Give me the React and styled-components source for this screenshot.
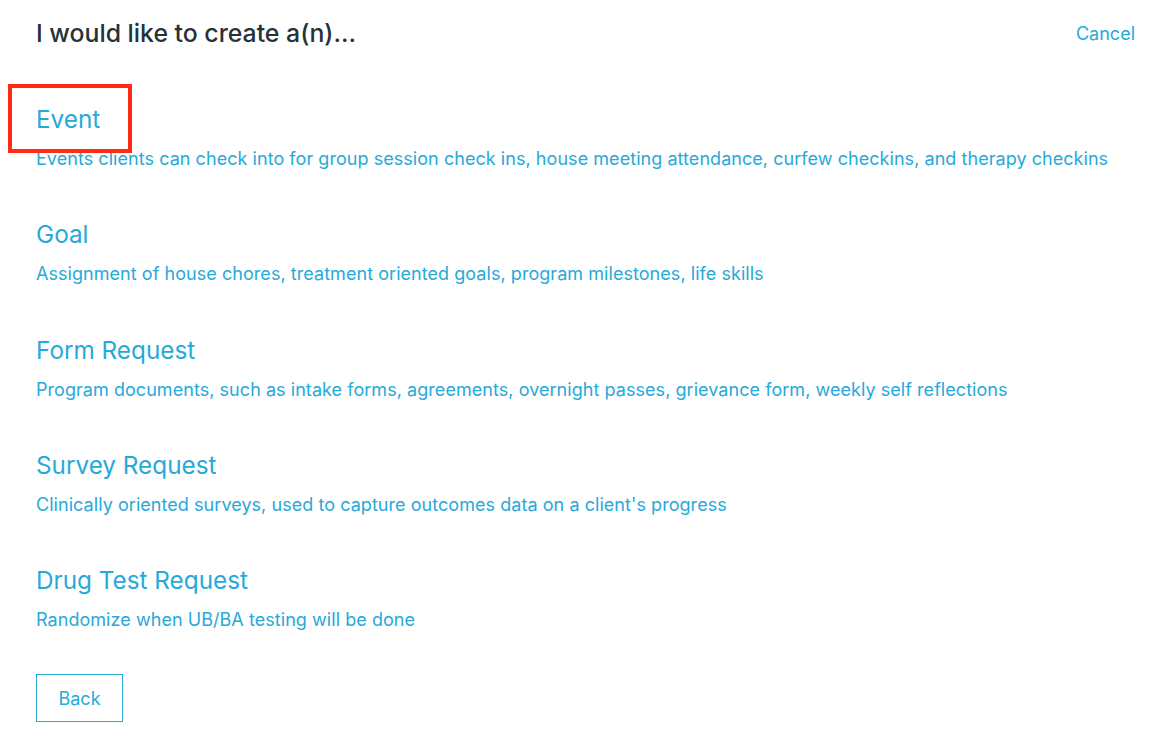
import React from "react";
import styled, { createGlobalStyle } from "styled-components";

const BLUE = "#27a9da";

const GlobalStyle = createGlobalStyle`
  body {
    margin: 0;
    background: #fff;
    font-family: Inter, "Noto Sans", sans-serif;
  }
`;

const Page = styled.div`
  padding: 0 33px 0 36px;
`;

const Header = styled.header`
  display: flex;
  align-items: center;
  justify-content: space-between;
  height: 66px;
`;

const Title = styled.h1`
  margin: 0;
  font-size: 24.8px;
  font-weight: 500;
  color: #263238;
`;

const Cancel = styled.a`
  font-size: 18px;
  color: ${BLUE};
  cursor: pointer;
`;

const List = styled.div`
  display: flex;
  flex-direction: column;
  gap: 48.25px;
  margin-top: 37px;
`;

const Item = styled.div`
  display: flex;
  flex-direction: column;
  gap: 13px;
`;

const ItemName = styled.div`
  position: relative;
  font-size: 24.3px;
  line-height: 32px;
  color: ${BLUE};
  cursor: pointer;
`;

const Highlight = styled.span`
  position: absolute;
  left: -28px;
  top: -19px;
  width: 124px;
  height: 69px;
  box-sizing: border-box;
  border: 4px solid #ff2b14;
  pointer-events: none;
`;

const ItemDesc = styled.div`
  font-size: 18px;
  line-height: 22px;
  letter-spacing: 0.05px;
  color: ${BLUE};
`;

const BackButton = styled.button`
  margin-top: 43px;
  width: 87px;
  height: 48px;
  border: 1px solid ${BLUE};
  background: #fff;
  color: ${BLUE};
  font-family: inherit;
  font-size: 18px;
  cursor: pointer;
`;

const options = [
  {
    name: "Event",
    desc: "Events clients can check into for group session check ins, house meeting attendance, curfew checkins, and therapy checkins",
    highlighted: true,
  },
  {
    name: "Goal",
    desc: "Assignment of house chores, treatment oriented goals, program milestones, life skills",
  },
  {
    name: "Form Request",
    desc: "Program documents, such as intake forms, agreements, overnight passes, grievance form, weekly self reflections",
  },
  {
    name: "Survey Request",
    desc: "Clinically oriented surveys, used to capture outcomes data on a client's progress",
  },
  {
    name: "Drug Test Request",
    desc: "Randomize when UB/BA testing will be done",
  },
];

export default function App() {
  return (
    <>
      <GlobalStyle />
      <Page>
        <Header>
          <Title>I would like to create a(n)...</Title>
          <Cancel>Cancel</Cancel>
        </Header>
        <List>
          {options.map((o) => (
            <Item key={o.name}>
              <ItemName>
                {o.name}
                {o.highlighted && <Highlight />}
              </ItemName>
              <ItemDesc>{o.desc}</ItemDesc>
            </Item>
          ))}
        </List>
        <BackButton>Back</BackButton>
      </Page>
    </>
  );
}
